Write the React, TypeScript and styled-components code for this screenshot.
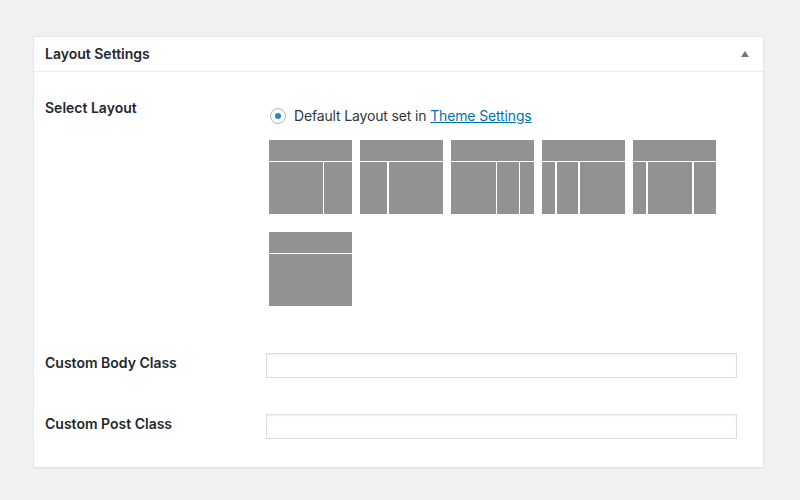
import React from "react";
import styled, { createGlobalStyle } from "styled-components";

const GlobalStyle = createGlobalStyle`
  body {
    margin: 0;
    background-color: #f1f1f1;
    font-family: Inter, "Noto Sans", sans-serif;
    color: #23282d;
  }
`;

const Page = styled.div`
  padding: 36px 36px 33px 33px;
  width: 731px;
`;

const Panel = styled.div`
  background-color: #fff;
  border: 1px solid #e5e5e5;
  box-shadow: 0 1px 1px rgba(0, 0, 0, 0.04);
`;

const Header = styled.div`
  display: flex;
  align-items: center;
  justify-content: space-between;
  height: 34px;
  padding: 0 14px 0 11px;
  border-bottom: 1px solid #eee;
`;

const Title = styled.h2`
  margin: 0;
  font-size: 14px;
  font-weight: 600;
  line-height: 18px;
`;

const Toggle = styled.span`
  width: 0;
  height: 0;
  border-left: 4px solid transparent;
  border-right: 4px solid transparent;
  border-bottom: 6px solid #72777c;
`;

const Body = styled.div`
  padding: 0 25px 10px 11px;
`;

interface RowProps {
  top: number;
  bottom: number;
}

const Row = styled.div<RowProps>`
  display: grid;
  grid-template-columns: 221px 1fr;
  padding: ${(p) => `${p.top}px 0 ${p.bottom}px`};
`;

const Label = styled.div<{ offset?: number }>`
  font-size: 14px;
  font-weight: 600;
  line-height: 18px;
  padding-top: ${(p) => p.offset ?? 0}px;
`;

const Field = styled.div`
  display: flex;
  flex-direction: column;
`;

const RadioRow = styled.label`
  display: flex;
  align-items: center;
  gap: 8px;
  margin: 9px 0 16px 4px;
  font-size: 14px;
  line-height: 16px;
  letter-spacing: -0.15px;
  color: #32373c;
`;

const Radio = styled.span`
  box-sizing: border-box;
  width: 16px;
  height: 16px;
  border-radius: 50%;
  border: 1px solid #b4b9be;
  box-shadow: inset 0 1px 2px rgba(0, 0, 0, 0.07);
  display: flex;
  align-items: center;
  justify-content: center;
  &::after {
    content: "";
    width: 6px;
    height: 6px;
    border-radius: 50%;
    background-color: #1e8cbe;
  }
`;

const Link = styled.a`
  color: #0073aa;
  text-decoration: underline;
`;

const LayoutGrid = styled.div`
  display: flex;
  flex-wrap: wrap;
  gap: 18px 8px;
  padding-left: 3px;
`;

const LayoutOption = styled.svg`
  display: block;
  width: 83px;
  height: 74px;
`;

const Input = styled.input`
  box-sizing: border-box;
  width: 471px;
  height: 25px;
  margin: 0;
  border: 1px solid #ddd;
  box-shadow: inset 0 1px 2px rgba(0, 0, 0, 0.07);
  background: #fff;
`;

// column boxes below the header bar, [x, width] in an 83px wide icon
const layouts: [number, number][][] = [
  [
    [0, 54],
    [55, 28],
  ],
  [
    [0, 27],
    [29, 54],
  ],
  [
    [0, 45],
    [46, 22],
    [69, 14],
  ],
  [
    [0, 13],
    [15, 21],
    [38, 45],
  ],
  [
    [0, 13],
    [15, 44],
    [61, 22],
  ],
  [[0, 83]],
];

const GRAY = "#929292";

export default function App() {
  return (
    <>
      <GlobalStyle />
      <Page>
        <Panel>
          <Header>
            <Title>Layout Settings</Title>
            <Toggle />
          </Header>
          <Body>
            <Row top={27} bottom={29}>
              <Label>Select Layout</Label>
              <Field>
                <RadioRow>
                  <Radio />
                  <span>
                    Default Layout set in <Link href="#">Theme Settings</Link>
                  </span>
                </RadioRow>
                <LayoutGrid>
                  {layouts.map((cols, i) => (
                    <LayoutOption key={i} viewBox="0 0 83 74">
                      <rect x="0" y="0" width="83" height="21" fill={GRAY} />
                      {cols.map(([x, w], j) => (
                        <rect key={j} x={x} y="22" width={w} height="52" fill={GRAY} />
                      ))}
                    </LayoutOption>
                  ))}
                </LayoutGrid>
              </Field>
            </Row>
            <Row top={18} bottom={18}>
              <Label offset={1}>Custom Body Class</Label>
              <Input type="text" />
            </Row>
            <Row top={18} bottom={18}>
              <Label offset={1}>Custom Post Class</Label>
              <Input type="text" />
            </Row>
          </Body>
        </Panel>
      </Page>
    </>
  );
}
